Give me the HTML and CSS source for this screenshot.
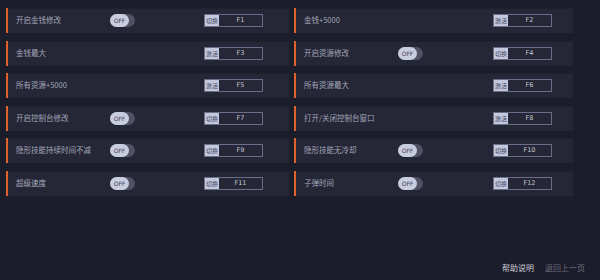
FILE: index.html
```html
<!DOCTYPE html>
<html>
<head>
<meta charset="utf-8">
<link rel="stylesheet" href="styles.css">
</head>
<body>
<div class="page">
  <div class="grid">
    <div class="row"><span class="label">开启金钱修改</span><span class="toggle"><span class="knob">OFF</span></span><span class="key"><span class="kt">切换</span><span class="kv">F1</span></span></div>
    <div class="row r"><span class="label">金钱+5000</span><span class="key"><span class="kt">激活</span><span class="kv">F2</span></span></div>
    <div class="row"><span class="label">金钱最大</span><span class="key"><span class="kt">激活</span><span class="kv">F3</span></span></div>
    <div class="row r"><span class="label">开启资源修改</span><span class="toggle"><span class="knob">OFF</span></span><span class="key"><span class="kt">切换</span><span class="kv">F4</span></span></div>
    <div class="row"><span class="label">所有资源+5000</span><span class="key"><span class="kt">激活</span><span class="kv">F5</span></span></div>
    <div class="row r"><span class="label">所有资源最大</span><span class="key"><span class="kt">激活</span><span class="kv">F6</span></span></div>
    <div class="row"><span class="label">开启控制台修改</span><span class="toggle"><span class="knob">OFF</span></span><span class="key"><span class="kt">切换</span><span class="kv">F7</span></span></div>
    <div class="row r"><span class="label">打开/关闭控制台窗口</span><span class="key"><span class="kt">激活</span><span class="kv">F8</span></span></div>
    <div class="row"><span class="label">隐形技能持续时间不减</span><span class="toggle"><span class="knob">OFF</span></span><span class="key"><span class="kt">切换</span><span class="kv">F9</span></span></div>
    <div class="row r"><span class="label">隐形技能无冷却</span><span class="toggle"><span class="knob">OFF</span></span><span class="key"><span class="kt">切换</span><span class="kv">F10</span></span></div>
    <div class="row"><span class="label">超级速度</span><span class="toggle"><span class="knob">OFF</span></span><span class="key"><span class="kt">切换</span><span class="kv">F11</span></span></div>
    <div class="row r"><span class="label">子弹时间</span><span class="toggle"><span class="knob">OFF</span></span><span class="key"><span class="kt">切换</span><span class="kv">F12</span></span></div>
  </div>
  <div class="footer">
    <span class="help">帮助说明</span>
    <span class="back">返回上一页</span>
  </div>
</div>
</body>
</html>
```

FILE: styles.css
```css
html, body {
  margin: 0;
  padding: 0;
  background: #1c1d2b;
}
body {
  width: 600px;
  height: 280px;
  overflow: hidden;
  font-family: "Noto Sans CJK SC", "Noto Sans", sans-serif;
}
.page {
  padding: 8px 0 0 6px;
  height: 274px;
  box-sizing: border-box;
  display: flex;
  flex-direction: column;
}
.grid {
  display: grid;
  grid-template-columns: 283px 279px;
  column-gap: 5px;
  row-gap: 7.5px;
}
.row {
  height: 25px;
  background: #252636;
  border-left: 2px solid #e0622a;
  box-shadow: inset 0 1px 0 #20212e;
  position: relative;
  box-sizing: border-box;
}
.label {
  position: absolute;
  left: 8px;
  top: 6px;
  font-size: 7.5px;
  line-height: 12px;
  color: #a3a6b8;
  white-space: nowrap;
}
.toggle {
  position: absolute;
  left: 102px;
  top: 6px;
  width: 25px;
  height: 13px;
  border-radius: 7px;
  background: #4f5265;
}
.knob {
  display: block;
  width: 19px;
  height: 13px;
  border-radius: 7px;
  background: #c9cde0;
  color: #3c4058;
  font-family: "DejaVu Sans", sans-serif;
  font-size: 6px;
  line-height: 13px;
  text-align: center;
}
.key {
  position: absolute;
  left: 196px;
  top: 6px;
  width: 59px;
  height: 13px;
  border: 1px solid #6b6e88;
  box-sizing: border-box;
  display: flex;
}
.r .key { left: 197px; }
.kt {
  width: 14px;
  height: 11px;
  background: #c4c8dc;
  color: #3d4160;
  font-size: 6px;
  line-height: 11px;
  text-align: center;
  white-space: nowrap;
  overflow: hidden;
}
.kv {
  flex: 1;
  color: #c5c8d6;
  font-family: "DejaVu Sans", sans-serif;
  font-size: 6.5px;
  line-height: 11px;
  text-align: center;
}
.footer {
  margin-top: auto;
  display: flex;
  justify-content: flex-end;
  gap: 11px;
  padding-right: 15px;
  font-size: 8px;
  line-height: 12px;
}
.help { color: #c9cbd6; }
.back { color: #6c6e7f; }
```
